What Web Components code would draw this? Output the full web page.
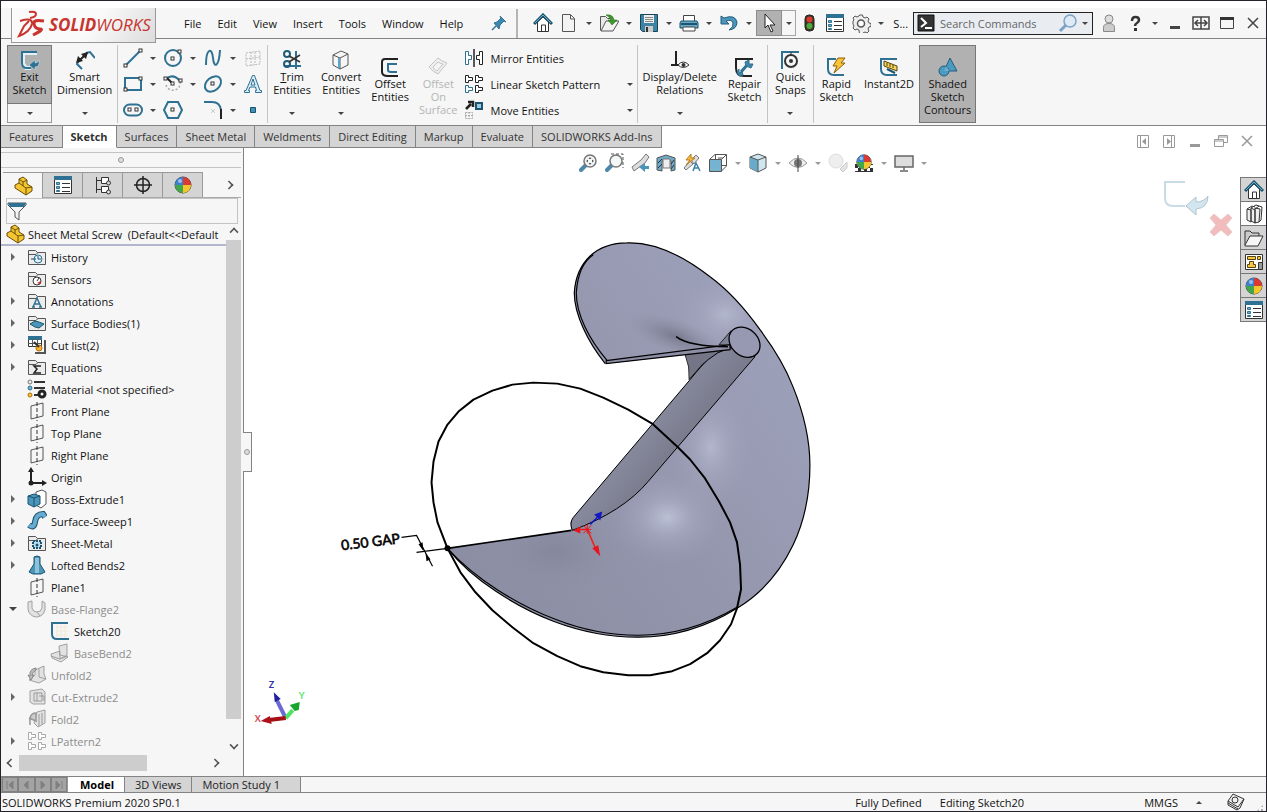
<!DOCTYPE html>
<html lang="en">
<head>
<meta charset="utf-8">
<title>SOLIDWORKS Premium 2020</title>
<style>
    :root {
        --bar: #f6f6f6;
        --tab: #d4d4d4;
        --line: #838383;
        --pressed: #b1b1b1;
    }

    * {
        box-sizing: border-box;
    }

    body {
        margin: 0;
        height: 100vh;
        display: flex;
        flex-direction: column;
        overflow: hidden;
        border: 1px solid #25232a;
        background: white;
        color: #111;
        font: 11px/13px "Open Sans", "Noto Sans", sans-serif;
    }

    main {
        flex: 1;
        min-height: 0;
        display: flex;
    }

    sw-viewport {
        flex: 1;
        min-width: 0;
    }
</style>
</head>
<body>
<sw-titlebar></sw-titlebar>
<sw-ribbon></sw-ribbon>
<sw-tabs></sw-tabs>
<main>
    <sw-panel></sw-panel>
    <sw-viewport></sw-viewport>
</main>
<sw-views></sw-views>
<sw-status>
    <span slot="product">SOLIDWORKS Premium 2020 SP0.1</span>
    <span slot="state">Fully Defined</span>
    <span slot="editing">Editing Sketch20</span>
    <span slot="units">MMGS</span>
</sw-status>

<script>
// Shared pieces of the icons
const node = (x, y) => `<rect x="${x - 1.5}" y="${y - 1.5}" width="3" height="3" fill="#fff" stroke="#333"/>`;
const folder = '<path d="M1.500 17.500V3.500h7l2 2h8v12z" fill="#ececec" stroke="#555"/><path d="M2 7.500h7l2-2" fill="none" stroke="#555"/>';
const plane = '<path d="M4 5l12-3v13L4 18z" fill="none" stroke="#555"/><path d="M10 1v19" stroke="#333" stroke-dasharray="4 2"/>';
const part = '<path d="M2 9l4-2V3l4-2 4 3v4l5 3v4l-6 4L2 12z" fill="#f3c531" stroke="#6b4e05"/><path d="M6 7l7 5 6-1M13 12v7M6 3l4 3v4M10 6l4-2" fill="none" stroke="#6b4e05"/>';
const ball = '<circle cx="10" cy="10" r="8" fill="#ddd" stroke="#444"/><path d="M10 10V2a8 8 0 0 0-8 8z" fill="#3d7fd0"/><path d="M10 10V2a8 8 0 0 1 8 8z" fill="#d93a32"/><path d="M10 10h8a8 8 0 0 1-8 8z" fill="#f2c62c"/><path d="M10 10v8a8 8 0 0 1-8-8z" fill="#42a64b"/><circle cx="7" cy="6" r="2" fill="#fff" opacity=".5"/>';
const sheet = '<path d="M1.500 1.500h17v17h-17z" fill="#fff" stroke="#333"/><path d="M1 1h18v4H1z" fill="#2e7192"/><path d="M3.500 7.500h3v2h-3zM3.500 11.500h3v2h-3zM3.500 15.500h3v1h-3z" fill="#6fb0d0" stroke="#2e7192"/><path d="M9 8.500h8M9 12.500h8M9 16.500h8" stroke="#333"/>';
const ring = 'fill="none" stroke="#2e7192" stroke-width="2"';
const grey = 'fill="#e2e2e2" stroke="#a0a0a0"';
const quad = (c1, c2) => [[1.5, 1.5, c1], [11.5, 1.5, c1], [1.5, 11.5, c2], [11.5, 11.5, c1]].map(([x, y, c]) =>
    `<path d="M${x} ${y}h3v2h4v3h-4v2h-3z" fill="#fff" stroke="${c}"/>`).join('');
const glass = '<path d="M8 12l-5 5" stroke="#4e87a8" stroke-width="4" stroke-linecap="round"/><circle cx="12" cy="8" r="6" fill="#f4f7f8" stroke="#777" stroke-width="1.500"/>';

const ICONS = {
    home: '<path d="M4.500 9v9.500h11V9L10 4z" fill="#fff" stroke="#333"/><path d="M8.500 18v-6h4v6" fill="none" stroke="#333"/><path d="M1 11l9-9 9 9" fill="none" stroke="#1c536d" stroke-width="3"/><path d="M2 10l8-8 8 8" fill="none" stroke="#6fb0d0"/>',
    pin: '<path d="M3 17l4-4" stroke="#2e7192" stroke-width="1.500"/><path d="M5 10l3-1 4-4-1-2 6 6-2-1-4 4-1 4z" fill="#3d86b0" stroke="#2e7192"/>',
    doc: '<path d="M3.500 1.500h8l4 4v13h-12z" fill="#f3f3f3" stroke="#555"/><path d="M11.500 2v4h4" fill="none" stroke="#555"/>',
    open: '<path d="M1.500 17.500v-14h5l2 2h5v3" fill="#e8e8e8" stroke="#555"/><path d="M2 18L7 8h13l-6 10z" fill="#f2f2f2" stroke="#555"/><path d="M7 2q7-1 8 5h3l-5 5-4-5h3q-1-3-5-5z" fill="#3c9b2a" stroke="#216313" stroke-width=".5"/>',
    save: '<path d="M1.500 1.500h17v17h-15l-2-2z" fill="#3d83a6" stroke="#1c4457"/><path d="M5 2h10v8H5z" fill="#eee"/><path d="M6 4.500h8M6 6.500h8M6 8.500h8" stroke="#888"/><path d="M6 13h8v6H6z" fill="#ccc"/><path d="M7 14h2v5H7z" fill="#333"/>',
    print: '<path d="M4.500 9V2.500h11V9" fill="#fff" stroke="#444"/><path d="M2 8h16l1 2v5H1v-5z" fill="#69a9ca" stroke="#1c536d"/><path d="M2 11h16" stroke="#1c536d" stroke-width="2"/><path d="M4 14h12v4H4z" fill="#fff" stroke="#444"/>',
    undo: '<path d="M2 3v8h8L7 8q6-2 7 2 1 4-4 7 8-1 8-8Q16 1 5 5z" fill="#4b95bb" stroke="#225d79"/>',
    arrow: '<path d="M6 1v14l3-3 3 7 2-1-3-6h5z" fill="#fff" stroke="#222"/>',
    traffic: '<rect x="6" y="2" width="9" height="16" rx="4" fill="#432" stroke="#222"/><circle cx="10.500" cy="6.500" r="3" fill="#d93a32"/><circle cx="10.500" cy="13" r="3" fill="#46ad3d"/>',
    list: sheet,
    gear: '<path d="M8.500 2h3l.5 2 2 1 2-1 2 2-1 2 1 2 2 .5v3l-2 .5-1 2 1 2-2 2-2-1-2 1-.5 1h-3L8 17l-2-1-2 1-2-2 1-2-1-2V8l1-1-1-2 2-2 2 1 2-1z" fill="#eee" stroke="#555"/><circle cx="10" cy="10.500" r="3.500" fill="#fff" stroke="#555" stroke-width="1.500"/>',
    prompt: '<path d="M2 2h16v16H2z" fill="#333" stroke="#111"/><path d="M5 5l5 5-5 4" fill="none" stroke="#fff" stroke-width="2"/><path d="M9 15h7" stroke="#fff" stroke-width="2"/>',
    search: '<path d="M8 12l-6 6" stroke="#7ba3c4" stroke-width="3"/><circle cx="12" cy="8" r="6" fill="#dfeaf4" stroke="#7ba3c4" stroke-width="1.500"/>',
    user: '<path d="M4.500 18.500v-4q0-4 5.500-4t5.500 4v4z" fill="#ccc" stroke="#888"/><circle cx="10" cy="6" r="4" fill="#ddd" stroke="#888"/>',
    help: '<path d="M7 8q0-4 3.500-4t3.500 3q0 2-2 3t-2 3" fill="none" stroke="#333" stroke-width="2.500"/><path d="M9 15h3v3H9z" fill="#333"/>',
    min: '<path d="M5 13h10v3H5z" fill="currentColor"/>',
    fit: '<path d="M2 4h16v12H2zM10 4v12M4 10h12M7 7l-3 3 3 3M13 7l3 3-3 3" fill="none" stroke="#444" stroke-width="1.500"/>',
    max: '<path d="M3.500 5.500h13v10h-13z" fill="none" stroke="#444"/><path d="M3 4h14v3H3z" fill="#333"/>',
    close: '<path d="M5 5l10 10M15 5L5 15" stroke="currentColor" stroke-width="1.500"/>',
    dockl: '<path d="M4.500 4.500h11v12h-11z M7.500 4v13" fill="none" stroke="currentColor"/><path d="M13 7v7l-4-3.500z" fill="currentColor"/>',
    dockr: '<path d="M4.500 4.500h11v12h-11z M12.500 4v13" fill="none" stroke="currentColor"/><path d="M8 7v7l4-3.500z" fill="currentColor"/>',
    restore: '<path d="M3.500 8.500h9v7h-9zM3 10h9M7.500 8V4.500h9v7H13M8 6h9" fill="none" stroke="currentColor"/>',

    exit: '<path d="M17 3H3v11l3 4h5" fill="none" stroke="#e4f1f8" stroke-width="4"/><path d="M17 2H2v11q0 5 5 5h4" ' + ring + '/><path d="M9 15l6-5v3q3 0 4-3 1 7-4 7v3z" fill="#2e7192" stroke="#d3e8f3" stroke-width=".5"/>',
    dim: '<path d="M11 3l4-1 5 6M3 12l-1 2 5 5" fill="none" stroke="#2e7192" stroke-width="2"/><path d="M3 12L12 3" stroke="#222" stroke-width="2"/><path d="M1 13l2-7 5 5zM13 2l-7 2 5 5z" fill="#222"/>',
    line: '<path d="M2 18L18 2" stroke="#2e7192" stroke-width="2"/>' + node(2.5, 17.5) + node(17.5, 2.5),
    circle: `<circle cx="10" cy="10" r="8" ${ring}/>` + node(9.5, 10.5) + node(16.5, 3.5),
    spline: '<path d="M3 17C3 0 9-1 10 10s6 9 7-8" ' + ring + '/>',
    grid: '<path d="M3 5l14-2v13L3 18zM8 4v14M12 4v13M3 11l14-2" fill="none" stroke="#bbb" stroke-dasharray="2 1"/>',
    rect: `<path d="M2 4h16v12H2z" ${ring}/>` + node(2.5, 15.5) + node(17.5, 4.5),
    arc: '<path d="M3 11a7 7 0 1 0 14-4" fill="none" stroke="#aaa" stroke-dasharray="2 2" stroke-width="1.500"/><path d="M3 5q7-6 14 2" fill="none" stroke="#2e7192" stroke-width="2"/><path d="M4 4l6 6" stroke="#222" stroke-width="2"/>' + node(2.5, 4.5) + node(17.5, 6.5) + node(9.5, 9.5),
    ellipse: `<ellipse cx="10" cy="10" rx="9" ry="6.500" transform="rotate(-40 10 10)" ${ring}/>` + node(9.5, 9.5),
    glyph: '<path d="M9.500 1.500h2l5.500 15h1.500v2h-6v-2h1l-1-3.500H7l-1.500 3.500h1v2h-5v-2H3zM8 11h4l-2-6z" fill="#d9eef8" stroke="#2e7192"/>',
    slot: `<rect x="1" y="4.500" width="18" height="11" rx="5.500" ${ring}/>` + node(6.5, 9.5) + node(13.5, 9.5),
    hex: `<path d="M1 10l4-8h10l4 8-4 8H5z" ${ring}/>` + node(9.5, 9.5),
    fillet: '<path d="M1 2h8q8 0 9 8" ' + ring + '/><path d="M18 9v10" stroke="#222" stroke-width="2"/><path d="M8 9l4 4M12 9l-4 4" stroke="#ccc"/>',
    point: '<path d="M7.500 7.500h5v5h-5z" fill="#3f91b7" stroke="#1c536d"/>',
    trim: '<path d="M2 16h17M14 1v18" stroke="#2e7192" stroke-width="2"/><circle cx="5" cy="4" r="3" fill="none" stroke="#205c7a" stroke-width="2"/><circle cx="5" cy="14" r="3" fill="none" stroke="#205c7a" stroke-width="2"/><path d="M7 6l11 6M7 12l11-7" stroke="#333" stroke-width="1.500"/>',
    convert: '<path d="M2 5l8-4 7 3v11l-8 4-7-4z" fill="#f6f6f6" stroke="#555"/><path d="M2 5l7 3 8-4M9 8v11" fill="none" stroke="#555"/><path d="M8 8v10" stroke="#58a6cc" stroke-width="2"/>',
    offset: '<path d="M18 2H5q-3 0-3 3v10q0 4 6 4h10" fill="none" stroke="#222" stroke-width="2"/><path d="M17 7H8v6q0 2 3 2h6" ' + ring + '/>',
    offsurf: '<path d="M1 10l9-9q3 3 9 5l-9 11q-5-2-9-7z" fill="#efefef" stroke="#c3c3c3"/><path d="M5 10l5-5q3 2 5 2l-6 7q-3-1-4-4z" fill="#f6f6f6" stroke="#c3c3c3"/>',
    mirror: '<path d="M1.500 3.500h3v4h3v4h-3v5h-3z" fill="#fff" stroke="#2e7192"/><path d="M18.500 3.500h-3v4h-3v4h3v5h3z" fill="#fff" stroke="#222"/><path d="M10 1v18" stroke="#222" stroke-width="1.500"/>',
    pattern: quad('#222', '#2e7192'),
    move: '<path d="M2 9l5-5M4 2h5v5" fill="none" stroke="#222" stroke-width="2.500"/><path d="M12 3h6v6h-6z" fill="#9dcbe2" stroke="#1c536d" stroke-width="2"/><path d="M1.500 12.500h7v6h-7zM1 15.500h7M5 12v7" fill="none" stroke="#aaa" stroke-dasharray="2 1"/>',
    relations: '<path d="M6 1v14M1 15h8" stroke="#222" stroke-width="2"/><path d="M8 15q5-6 11 0-6 5-11 0z" fill="#fff" stroke="#333"/><circle cx="13.500" cy="15" r="2" fill="#333"/>',
    repair: '<path d="M19 2H2v9q0 8 8 8h8" fill="none" stroke="#222" stroke-width="2"/><path d="M7 15l7-8" stroke="#2e7192" stroke-width="3"/><path d="M5 12v4l3-1 1 3-4 1-2-4zM12 9l-1-4 4-2v4h4l-2 4z" fill="#3f86aa" stroke="#2e7192"/>',
    snaps: '<path d="M1 2h18M2 2v17" stroke="#2e7192" stroke-width="2"/><circle cx="11" cy="11" r="6" fill="none" stroke="#333" stroke-width="2"/><circle cx="11" cy="11" r="2" fill="#333"/><path d="M11 2v4" stroke="#333"/>',
    rapid: '<path d="M10 2H2v10q0 6 6 6h10" ' + ring + '/><path d="M12 1h7l-4 5h4L8 16l3-7H7z" fill="#f8c63b" stroke="#925d08"/>',
    instant: '<path d="M18 2H2v10q0 6 6 6h10" ' + ring + '/><path d="M5 4l13 5v5L5 9z" fill="#f4d45c" stroke="#554411"/><path d="M8 6v3M11 7v3M14 8v3" stroke="#554411"/><path d="M8 12l8 4" stroke="#1c536d" stroke-width="2"/>',
    contours: '<path d="M12 1l7 13H6z" fill="#4b9ac2" stroke="#245d7c"/><circle cx="6" cy="14" r="5" fill="#4b9ac2" stroke="#245d7c"/><path d="M8 9l4 5H6z" fill="#85bbd6" opacity=".6"/>',

    part,
    config: '<path d="M3.500 2v16M4 5.500h4M4 14.500h4" fill="none" stroke="#333"/><path d="M8.500 2.500h7v6h-7zM8.500 11.500h7v6h-7z" fill="#fff" stroke="#333"/><circle cx="15.500" cy="8" r="2" fill="#ddd" stroke="#333"/><circle cx="15.500" cy="17" r="2" fill="#ddd" stroke="#333"/>',
    target: '<circle cx="10" cy="10" r="6.500" fill="none" stroke="#222" stroke-width="1.500"/><path d="M10 1v18M1 10h18" stroke="#222" stroke-width="1.500"/>',
    ball,
    funnel: '<path d="M1 2h18v2l-7 7v8l-4-3v-5L1 4z" fill="#f4f4f4" stroke="#555"/><path d="M1 2h18l-2 4H3z" fill="#2e7192"/>',
    history: folder + '<circle cx="11" cy="12" r="4" fill="#dff0fa" stroke="#2e7192"/><path d="M11 9v3h3M4 12h5" stroke="#1c536d" fill="none"/>',
    sensors: folder + '<circle cx="10" cy="12" r="4" fill="#fff" stroke="#333"/><path d="M10 12l2-3" stroke="#333"/><path d="M10 14l4-2-1 3z" fill="#d22"/>',
    annot: folder + '<path d="M6 16l4-9 4 9M7.500 13h5M5 16h3M12 16h3" fill="none" stroke="#2e7192" stroke-width="1.500"/>',
    surf: folder + '<path d="M3 11l5-3 4 1 5 2-5 4-4-1z" fill="#4b95bb" stroke="#1c536d"/>',
    cut: '<path d="M1.500 1.500h13v10h-13z" fill="#fff" stroke="#333"/><path d="M1 1h14v4H1z" fill="#2e7192"/><path d="M5.500 4v8M10.500 4v8M1 8.500h13" stroke="#555"/><path d="M18 5v13H8" fill="none" stroke="#555" stroke-width="2"/><circle cx="12" cy="13" r="3" fill="#f7b733" stroke="#b06b09"/><path d="M7 7l5 5" stroke="#333" stroke-width="2"/>',
    equations: folder + '<path d="M14 9H7l3 3-3 4h7" fill="none" stroke="#222" stroke-width="1.500"/>',
    material: '<path d="M7 3h11M7 9h11M7 16h4" stroke="#333" stroke-width="2"/><circle cx="3" cy="3" r="2" fill="#eee" stroke="#777"/><circle cx="3" cy="9" r="2" fill="#6fb0d0" stroke="#2e7192"/><circle cx="3" cy="16" r="2" fill="#f7c744" stroke="#b06b09"/><circle cx="15" cy="15" r="3" fill="none" stroke="#222" stroke-width="3"/>',
    plane,
    origin: '<path d="M4 3v13h12" fill="none" stroke="#222" stroke-width="2"/><path d="M1 5l3-5 3 5zM15 13l5 3-5 3z" fill="#222"/><circle cx="4" cy="16" r="2.500" fill="#222"/>',
    boss: '<path d="M9 3l6-2 4 2v12l-5 4-5-3z" fill="#fff" stroke="#555"/><path d="M1 7l6-2 6 2v8l-6 3-6-3z" fill="#4b95bb" stroke="#1c536d"/><path d="M1 7l6 2 6-2M7 9v9" fill="none" stroke="#1c536d"/>',
    sweep: '<path d="M2 14q5 4 6-3 1-8 8-8l2 3" fill="none" stroke="#1c536d" stroke-width="6"/><path d="M2 14q5 4 6-3 1-8 8-8l2 3" fill="none" stroke="#67abd0" stroke-width="4"/>',
    sheetmetal: folder + '<path d="M6 8h8v7H6z" fill="#b9deef" stroke="#1c536d" stroke-width="2" stroke-dasharray="2 1"/><circle cx="10" cy="12" r="1.500" fill="#1c536d"/>',
    loft: '<path d="M7 2q3-2 6 0v7l5 8-4 2H6l-4-2 5-8z" fill="#4b95bb" stroke="#1c536d"/><path d="M9 3v15M11 3v15" stroke="#d3edf8"/>',
    flange: `<path d="M1 3l4-1v7q1 4 5 4t5-4V2l3 2v7q-2 7-9 7-7-1-8-8z" ${grey}/><path d="M10 13l3 4" stroke="#a0a0a0"/>`,
    sketch: '<path d="M6 6h12M6 10h12M6 14h12M7 4v13M11 4v13M15 4v13" stroke="#f2ead7"/><path d="M18 2H2v11q0 5 5 5h12" ' + ring + '/>',
    bend: `<path d="M9 3l8-2v11l-7 4zM1 11l9-3v4l8 2-7 5-9-4z" ${grey}/><path d="M1 13l9 3 8-3" fill="none" stroke="#a0a0a0"/>`,
    unfold: `<path d="M8 5l9-4v8l2 5-7 4-10-3 6-5z" ${grey}/><path d="M9 3q-7 1-6 8l-2-1 3 5 3-5-2 1q0-4 4-6z" fill="#bbb" stroke="#888"/><path d="M12 4v8l7 2" fill="none" stroke="#a0a0a0"/>`,
    cutx: `<path d="M3 4l12-2 3 3v12H6l-3-2z" ${grey}/><path d="M7 6h8v8H7zM10 6v8M12 9h5v5" fill="none" stroke="#999"/>`,
    fold: `<path d="M10 3l8-2v13l-7 4-4-4z" ${grey}/><path d="M3 16V9q1-5 6-5v8L2 9" fill="#ccc" stroke="#999" stroke-width="1.500"/><path d="M12 5v12M15 4v11" stroke="#999"/>`,
    lpat: quad('#a8a8a8', '#a8a8a8'),

    zoomfit: glass + '<path d="M12 4l1.500 2h-3zM12 12l1.500-2h-3zM8 8l2-1.500v3zM16 8l-2-1.500v3z" fill="#555"/>',
    zoomarea: glass + '<path d="M7 1h12v14" fill="none" stroke="#555" stroke-dasharray="3 2"/>',
    prevview: '<path d="M2 14l9-7 5-6 3 3-4 6-11 8z" fill="#ddd" stroke="#777"/><path d="M9 14l6-4v3h4v3h-4v3z" fill="#4b95bb"/>',
    section: '<path d="M1 5l9-3 9 3v12l-4 1V8H6v10l-5-1z" fill="#6fa9c6" stroke="#555"/><path d="M2 10l4-4M2 15l4-4M15 11l3-4M15 16l3-4" stroke="#234"/><path d="M7 6v9h7V6z" fill="#eee" stroke="#777"/>',
    dynann: '<path d="M2 15l6-7 3 3-7 6zM9 7l5-5 3 3-5 6z" fill="#ddd" stroke="#777"/><path d="M9 1L4 7h4l-4 5 9-7H9z" fill="#f6bd45" stroke="#b67a18"/><path d="M11 18l3-8 4 8M12.500 15h4" fill="none" stroke="#3b82a8" stroke-width="1.500"/>',
    orient: '<path d="M1.500 6.500h12v12h-12z" fill="#75b3d0" stroke="#555"/><path d="M2 6l5-4.500h11.500V13l-5 5M14 6l4-4M7.500 2v4M14 12.500h4M10 5h5" fill="none" stroke="#555"/>',
    style: '<path d="M2 4l8-3 8 3v11l-8 4-8-4z" fill="#cfe5ef" stroke="#555"/><path d="M2 4l8 3v12l-8-4z" fill="#69aaca"/><path d="M2 4l8 3 8-3M10 7v12" fill="none" stroke="#555"/>',
    eye: '<path d="M1 10q9-10 18 0-9 9-18 0z" fill="#eee" stroke="#999"/><circle cx="10" cy="10" r="4" fill="#777"/><path d="M10 2v17" stroke="#444"/>',
    appear: '<circle cx="8" cy="8" r="7" fill="#eee" stroke="#ddd"/><path d="M12 16l7-7v6l-4 4z" fill="#e3e3e3" stroke="#ccc"/>',
    scene: '<path d="M1 11h18v8H1z" fill="#333"/><path d="M4 12h3v3H4zM10 12h3v3h-3zM16 12h3v3h-3zM1 15h3v3H1zM7 15h3v3H7zM13 15h3v3h-3z" fill="#fff"/><g transform="translate(1 0) scale(.9)">' + ball + '</g>',
    screen: '<path d="M1 3h18v11H1z" fill="#ddd" stroke="#666" stroke-width="1.500"/><path d="M10 14v3M6 18h8" stroke="#666" stroke-width="1.500"/>',

    library: '<path d="M3 5l4 1v12l-4-2zM7 4l4 2v13l-4-2zM11 4l5 1-1 13-4 1z" fill="#eee" stroke="#333"/><path d="M3 5l5-3 3 1M7 4l5-3 3 1M11 5l4-3 3 1-1 13-2 2" fill="none" stroke="#333"/>',
    files: '<path d="M1 17V3h5l2 2h7v3" fill="#ccc" stroke="#333"/><path d="M1 17L6 8h13l-5 10H1z" fill="#f6f6f6" stroke="#333"/>',
    palette: '<path d="M1.500 2.500h17v15h-17z" fill="#fff" stroke="#333"/><path d="M3.500 4.500h8v3h-8zM13.500 4.500h3v3h-3zM5.500 9.500h4v3h2v3h-8v-3h2z" fill="#f7c744" stroke="#554411"/><path d="M14.500 10.500h4v7h-4z" fill="#999" stroke="#333"/>',
    stamp: '<path d="M2 9l5-7 11 5-4 9-3 2-9-5z" fill="#eee" stroke="#333"/><path d="M2 9l10 6 6-8M2 11l10 6" fill="none" stroke="#333"/><circle cx="9" cy="8" r="3" fill="none" stroke="#333"/>',
};

// Base class: draws the component's template into an open shadow root
class SwElement extends HTMLElement {
    constructor() {
        super();
        this.attachShadow({ mode: 'open' });
    }

    connectedCallback() {
        this.shadowRoot.innerHTML = `
            <style>
                *, :host { box-sizing: border-box; }
                button {
                    font: inherit;
                    color: inherit;
                    background: none;
                    border: 0;
                    padding: 0;
                    margin: 0;
                }
                ${this.styles()}
            </style>
            ${this.template()}
        `;
    }

    styles() {
        return '';
    }
}

class SwIcon extends SwElement {
    styles() {
        return `
            :host { display: block; flex: none; width: 20px; height: 20px; }
            svg { display: block; width: 100%; height: 100%; }
        `;
    }

    template() {
        return `<svg viewBox="0 0 20 20" aria-hidden="true">${ICONS[this.getAttribute('name')] || ''}</svg>`;
    }
}

// Small black triangle of a drop-down
class SwCaret extends SwElement {
    styles() {
        return `
            :host { display: flex; flex: none; width: 14px; justify-content: center; align-items: center; }
            i { border: 3px solid transparent; border-top-color: #444; border-bottom: 0; }
            :host([light]) i { border-top-color: #999; }
        `;
    }

    template() {
        return '<i></i>';
    }
}

// Icon button of a toolbar, with an optional drop-down beside it
class SwIconButton extends SwElement {
    styles() {
        return `
            :host { display: flex; flex: none; height: 26px; }
            button { display: flex; align-items: center; justify-content: center; }
            .main { width: 26px; }
            .more { width: 14px; }
            :host([pressed]) .main { background: var(--pressed); border: 1px solid #8d8d8d; }
            :host([pressed]) .more { border: 1px solid #a5a5a5; border-left: 0; }
        `;
    }

    template() {
        const icon = this.getAttribute('icon');
        const label = this.getAttribute('label') || icon;
        const light = this.hasAttribute('light') ? 'light' : '';
        return `
            <button class="main" aria-label="${label}"><sw-icon name="${icon}"></sw-icon></button>
            ${this.hasAttribute('menu') ? `<button class="more" aria-label="${label} options"><sw-caret ${light}></sw-caret></button>` : ''}
        `;
    }
}

// Tall ribbon button: icon over a slotted label
class SwTool extends SwElement {
    styles() {
        return `
            :host { display: flex; flex-direction: column; flex: none; height: 78px; min-width: 45px; }
            button { width: 100%; text-align: center; white-space: nowrap; }
            .main { flex: 1; padding: 12px 5px 0; display: flex; flex-direction: column; align-items: center; border: 0 solid #777; }
            :host([menu]) .main { padding-top: 5px; }
            .more { height: 19px; display: flex; justify-content: center; border: 0 solid #999; }
            :host([pressed]) .main { background: var(--pressed); border-width: 1px; padding: 11px 4px 0; }
            :host([pressed][menu]) .main { padding-top: 4px; }
            :host([pressed]) .more { border-width: 0 1px 1px; }
            :host([disabled]) { color: #b5b5b5; }
            button:disabled { color: inherit; }
        `;
    }

    template() {
        const menu = this.hasAttribute('menu');
        return `
            <button class="main" ${this.hasAttribute('disabled') ? 'disabled' : ''}>
                <sw-icon name="${this.getAttribute('icon')}"></sw-icon>
                <span><slot></slot></span>
            </button>
            ${menu ? '<button class="more" aria-label="More"><sw-caret></sw-caret></button>' : ''}
        `;
    }
}

class SwTitlebar extends SwElement {
    styles() {
        return `
            :host { display: flex; align-items: center; flex: none; height: 38px; padding-top: 7px; background: linear-gradient(white 7px, var(--bar) 7px); border-bottom: 1px solid var(--line); }
            .logo { align-self: flex-start; flex: none; width: 145px; height: 35px; margin: 0 20px -5px 10px; padding-left: 4px; display: flex; align-items: center; gap: 3px; background: linear-gradient(125deg, #fafafa 55%, #dcdcdc); border: 1px solid #999; border-top: 0; z-index: 1; position: relative; color: #c8352f; font: italic 17px/20px "Open Sans", sans-serif; }
            .logo svg { width: 30px; height: 30px; flex: none; }
            nav { display: flex; }
            nav button { padding: 0 8px; }
            .pin { margin-left: 15px; }
            .quick { display: flex; align-items: center; margin-left: 4px; padding-left: 12px; height: 29px; border-left: 2px solid #b5b5b5; }
            .name { margin: 0 5px; }
            .search { flex: 0 1 180px; min-width: 0; height: 23px; display: flex; align-items: center; background: #e9edf2; border: 1px solid #222; padding-left: 2px; }
            input { flex: 1; min-width: 0; border: 0; background: none; font: inherit; padding: 0 4px; outline: 0; }
            input::placeholder { color: #666; }
            .window { display: flex; margin-left: auto; color: #444; }
        `;
    }

    template() {
        return `
            <div class="logo">
                <svg viewBox="0 0 30 30" fill="none" stroke="#c8352f" stroke-width="2">
                    <path d="M13 2Q20 1 20 4T14 8M4 11Q17 7 16 14 14 22 3 26L8 16 13 11"/>
                    <path d="M28 11Q17 9 18 14T24 19 17 25" stroke-width="3"/>
                </svg>
                <span><b>SOLID</b>WORKS</span>
            </div>
            <nav>
                ${['File', 'Edit', 'View', 'Insert', 'Tools', 'Window', 'Help'].map(m => `<button>${m}</button>`).join('')}
            </nav>
            <sw-icon-button class="pin" icon="pin"></sw-icon-button>
            <div class="quick">
                <sw-icon-button icon="home"></sw-icon-button>
                <sw-icon-button icon="doc" menu></sw-icon-button>
                <sw-icon-button icon="open" menu></sw-icon-button>
                <sw-icon-button icon="save" menu></sw-icon-button>
                <sw-icon-button icon="print" menu></sw-icon-button>
                <sw-icon-button icon="undo" menu></sw-icon-button>
                <sw-icon-button icon="arrow" label="Select" menu pressed></sw-icon-button>
                <sw-icon-button icon="traffic" label="Rebuild"></sw-icon-button>
                <sw-icon-button icon="list" label="File properties"></sw-icon-button>
                <sw-icon-button icon="gear" label="Options" menu></sw-icon-button>
                <span class="name">S...</span>
            </div>
            <div class="search">
                <sw-icon name="prompt"></sw-icon>
                <input type="text" aria-label="Search Commands" placeholder="Search Commands">
                <sw-icon name="search"></sw-icon>
                <sw-caret></sw-caret>
            </div>
            <div class="window">
                <sw-icon-button icon="user"></sw-icon-button>
                <sw-icon-button icon="help" menu></sw-icon-button>
                <sw-icon-button icon="min" label="Minimize"></sw-icon-button>
                <sw-icon-button icon="fit" label="Span displays"></sw-icon-button>
                <sw-icon-button icon="max" label="Maximize"></sw-icon-button>
                <sw-icon-button icon="close"></sw-icon-button>
            </div>
        `;
    }
}

class SwRibbon extends SwElement {
    styles() {
        return `
            :host { display: flex; flex: none; height: 87px; padding: 6px 0 0 6px; background: var(--bar); border-bottom: 1px solid var(--line); }
            hr { flex: none; width: 1px; height: 78px; margin: 0; border: 0; background: #c4c4c4; }
            .sketch { display: grid; grid-template-columns: 40px 40px 40px 26px; grid-auto-rows: 26px; padding: 0 1px 0 2px; }
            .list { width: 174px; padding-left: 1px; }
            .list button { width: 100%; height: 26px; display: flex; align-items: center; gap: 7px; }
            .list span { flex: 1; text-align: left; }
        `;
    }

    template() {
        const small = ['line+', 'circle+', 'spline+', 'grid', 'rect+', 'arc+', 'ellipse+', 'glyph', 'slot+', 'hex', 'fillet+', 'point'];
        return `
            <sw-tool icon="exit" menu pressed>Exit<br>Sketch</sw-tool>
            <sw-tool icon="dim" menu>Smart<br>Dimension</sw-tool>
            <hr>
            <div class="sketch">
                ${small.map(s => `<sw-icon-button icon="${s.replace('+', '')}" ${s.endsWith('+') ? 'menu' : ''}></sw-icon-button>`).join('')}
            </div>
            <hr>
            <sw-tool icon="trim" menu><u>T</u>rim<br>Entities</sw-tool>
            <sw-tool icon="convert" menu>Convert<br>Entities</sw-tool>
            <sw-tool icon="offset">Offset<br>Entities</sw-tool>
            <sw-tool icon="offsurf" disabled>Offset<br>On<br>Surface</sw-tool>
            <div class="list">
                <button><sw-icon name="mirror"></sw-icon><span>Mirror Entities</span></button>
                <button><sw-icon name="pattern"></sw-icon><span>Linear Sketch Pattern</span><sw-caret></sw-caret></button>
                <button><sw-icon name="move"></sw-icon><span>Move Entities</span><sw-caret></sw-caret></button>
            </div>
            <hr>
            <sw-tool icon="relations" menu>Display/Delete<br>Relations</sw-tool>
            <sw-tool icon="repair">Repair<br>Sketch</sw-tool>
            <hr>
            <sw-tool icon="snaps" menu>Quick<br>Snaps</sw-tool>
            <hr>
            <sw-tool icon="rapid">Rapid<br>Sketch</sw-tool>
            <sw-tool icon="instant">Instant2D</sw-tool>
            <sw-tool icon="contours" pressed>Shaded<br>Sketch<br>Contours</sw-tool>
        `;
    }
}

class SwTabs extends SwElement {
    styles() {
        return `
            :host { display: flex; flex: none; height: 22px; background: white; }
            [role=tab] { flex: none; padding: 0 8px; background: var(--tab); color: #333; border: 1px solid var(--line); border-width: 0 1px 1px 0; }
            [aria-selected=true] { background: white; font-weight: bold; border-bottom-color: white; }
            .window { display: flex; margin: 2px 6px 0 auto; color: #999; }
        `;
    }

    template() {
        const tabs = ['Features', 'Sketch', 'Surfaces', 'Sheet Metal', 'Weldments', 'Direct Editing', 'Markup', 'Evaluate', 'SOLIDWORKS Add-Ins'];
        return `
            ${tabs.map(t => `<button role="tab" aria-selected="${t === 'Sketch'}">${t}</button>`).join('')}
            <div class="window">
                <sw-icon-button icon="dockl"></sw-icon-button>
                <sw-icon-button icon="dockr"></sw-icon-button>
                <sw-icon-button icon="min"></sw-icon-button>
                <sw-icon-button icon="restore"></sw-icon-button>
                <sw-icon-button icon="close"></sw-icon-button>
            </div>
        `;
    }
}

// Feature tree rows: icon, text, flags (+ closed, - open, x suppressed, > child)
const FEATURES = [
    ['history', 'History', '+'],
    ['sensors', 'Sensors', ''],
    ['annot', 'Annotations', '+'],
    ['surf', 'Surface Bodies(1)', '+'],
    ['cut', 'Cut list(2)', '+'],
    ['equations', 'Equations', '+'],
    ['material', 'Material &lt;not specified&gt;', ''],
    ['plane', 'Front Plane', ''],
    ['plane', 'Top Plane', ''],
    ['plane', 'Right Plane', ''],
    ['origin', 'Origin', ''],
    ['boss', 'Boss-Extrude1', '+'],
    ['sweep', 'Surface-Sweep1', '+'],
    ['sheetmetal', 'Sheet-Metal', '+'],
    ['loft', 'Lofted Bends2', '+'],
    ['plane', 'Plane1', ''],
    ['flange', 'Base-Flange2', '-x'],
    ['sketch', 'Sketch20', '>'],
    ['bend', 'BaseBend2', '>x'],
    ['unfold', 'Unfold2', 'x'],
    ['cutx', 'Cut-Extrude2', '+x'],
    ['fold', 'Fold2', 'x'],
    ['lpat', 'LPattern2', '+x'],
];

class SwFeature extends SwElement {
    styles() {
        return `
            :host { display: flex; align-items: center; height: 22px; padding-left: 7px; white-space: nowrap; }
            .fold { width: 10px; height: 10px; margin-right: 9px; flex: none; display: flex; align-items: center; justify-content: center; }
            .fold::before { content: ""; border: 4px solid transparent; border-right: 0; }
            :host([fold="+"]) .fold::before { border-left-color: #666; }
            :host([fold="-"]) .fold::before { border: 4px solid transparent; border-top-color: #444; border-bottom: 0; }
            sw-icon { margin-right: 4px; }
            :host([child]) { padding-left: 30px; }
            :host([suppressed]) { color: #8c8c8c; }
        `;
    }

    template() {
        const tag = this.getAttribute('fold') ? 'button' : 'span';
        return `<${tag} class="fold" ${tag === 'button' ? 'aria-label="Toggle"' : ''}></${tag}><sw-icon name="${this.getAttribute('icon')}"></sw-icon><slot></slot>`;
    }
}

class SwPanel extends SwElement {
    styles() {
        return `
            :host { position: relative; display: flex; flex-direction: column; flex: none; width: 243px; background: var(--bar); border-right: 1px solid var(--line); }
            .grip { flex: none; height: 16px; margin: 4px 2px 4px 0; border: 1px solid #c4c4c4; border-width: 1px 0; display: flex; justify-content: center; align-items: center; }
            .grip i, .edge i { width: 6px; height: 6px; border: 1px solid #999; border-radius: 50%; background: #ddd; }
            .tabs { flex: none; display: flex; height: 26px; margin: 0 2px; border-bottom: 1px solid #aaa; }
            .tabs button { width: 40px; display: flex; align-items: center; justify-content: center; background: var(--tab); border: 1px solid #999; border-left: 0; border-bottom: 0; }
            .tabs [aria-selected=true] { background: var(--bar); margin-bottom: -1px; }
            .tabs .next { margin-left: auto; width: 24px; background: none; border: 0; }
            .chev { width: 8px; height: 8px; border: 2px solid #555; border-width: 2px 2px 0 0; rotate: 45deg; scale: .8; }
            .filter { flex: none; height: 26px; margin: 0 5px; display: flex; align-items: center; border: 1px solid #c4c4c4; }
            .filter input { flex: 1; min-width: 0; border: 0; background: none; font: inherit; outline: 0; }
            .body { flex: 1; min-height: 0; display: flex; margin-right: 2px; }
            .tree { flex: 1; min-width: 0; overflow: hidden; }
            .root { display: flex; align-items: center; gap: 3px; height: 22px; padding-left: 4px; border-bottom: 2px solid #b3b6cf; }
            .root span { white-space: pre; }
            .vbar { flex: none; width: 15px; display: flex; flex-direction: column; align-items: center; }
            .vbar button, .hbar button { width: 16px; height: 16px; flex: none; display: flex; align-items: center; justify-content: center; }
            .vbar .thumb { width: 15px; flex: 26; background: #cdcdcd; }
            .vbar .rest { flex: 1; }
            .up { rotate: -45deg; }
            .down { rotate: 135deg; }
            .left { rotate: -135deg; }
            .hbar { flex: none; display: flex; height: 16px; margin: 2px 20px 5px 2px; }
            .hbar .thumb { width: 128px; background: #cdcdcd; }
            .hbar button:last-child { margin-left: auto; }
            .edge { position: absolute; left: 242px; top: 284px; width: 9px; height: 40px; background: var(--bar); border: 1px solid var(--line); border-left: 0; z-index: 1; display: flex; align-items: center; justify-content: center; }
        `;
    }

    template() {
        const tabs = ['part', 'list', 'config', 'target', 'ball'];
        const rows = FEATURES.map(([icon, text, flags]) => {
            const fold = flags.includes('+') ? '+' : flags.includes('-') ? '-' : '';
            return `<sw-feature icon="${icon}" fold="${fold}" ${flags.includes('>') ? 'child' : ''} ${flags.includes('x') ? 'suppressed' : ''}>${text}</sw-feature>`;
        });
        return `
            <div class="grip"><i></i></div>
            <div class="tabs">
                ${tabs.map((t, i) => `<button role="tab" aria-label="${t}" aria-selected="${i === 0}"><sw-icon name="${t}"></sw-icon></button>`).join('')}
                <button class="next" aria-label="More tabs"><i class="chev"></i></button>
            </div>
            <label class="filter"><sw-icon name="funnel"></sw-icon><input type="text" aria-label="Filter"></label>
            <div class="body">
                <div class="tree">
                    <div class="root"><sw-icon name="part"></sw-icon><span>Sheet Metal Screw  (Default&lt;&lt;Default</span></div>
                    ${rows.join('')}
                </div>
                <div class="vbar">
                    <button aria-label="Scroll up"><i class="chev up"></i></button>
                    <div class="thumb"></div>
                    <div class="rest"></div>
                    <button aria-label="Scroll down"><i class="chev down"></i></button>
                </div>
            </div>
            <div class="hbar">
                <button aria-label="Scroll left"><i class="chev left"></i></button>
                <div class="thumb"></div>
                <button aria-label="Scroll right"><i class="chev"></i></button>
            </div>
            <div class="edge"><i></i></div>
        `;
    }
}

// The helical blade, its shaft and the open sketch
class SwModel extends SwElement {
    styles() {
        return `
            :host { display: block; min-height: 0; }
            svg { display: block; width: 100%; height: 100%; }
            text { font-family: Lato, sans-serif; }
        `;
    }

    template() {
        const outer = 'M605 364C588 343 574 315 574 293C576 262 596 243 627 243C656 242 683 256 710 277C729 291 745 309 760 330C775 350 785 366 793 387C804 414 810 439 810 466C810 498 803 525 793 546C780 573 762 594 737 609C708 627 675 638 638 638C611 638 582 633 553 622C517 608 472 581 447 549';
        const body = outer + 'L571 531L570 523L573 518L690 380Q690 365 685 355Z';
        return `
            <svg viewBox="244 148 1022 629" role="img" aria-label="Sheet metal screw">
                <defs>
                    <linearGradient id="blade" gradientUnits="userSpaceOnUse" x1="470" y1="600" x2="790" y2="380">
                        <stop offset="0" stop-color="#8b8da3"/><stop offset=".5" stop-color="#9395ac"/><stop offset="1" stop-color="#9c9fb8"/>
                    </linearGradient>
                    <linearGradient id="shaft" gradientUnits="userSpaceOnUse" x1="640" y1="425" x2="690" y2="465">
                        <stop offset="0" stop-color="#898b9f"/><stop offset=".6" stop-color="#7c7e90"/><stop offset="1" stop-color="#74768a"/>
                    </linearGradient>
                    <radialGradient id="shine"><stop offset="0" stop-color="#bcc0d5"/><stop offset=".4" stop-color="#a9acc3" stop-opacity=".6"/><stop offset="1" stop-color="#9b9db5" stop-opacity="0"/></radialGradient>
                    <radialGradient id="shade"><stop offset="0" stop-color="#6f7183" stop-opacity=".8"/><stop offset="1" stop-color="#8b8da2" stop-opacity="0"/></radialGradient>
                    <clipPath id="outline"><path d="${body}"/></clipPath>
                </defs>

                <path d="${body}" fill="url(#blade)"/>
                <g clip-path="url(#outline)">
                    <ellipse cx="667" cy="518" rx="60" ry="48" fill="url(#shine)"/>
                    <ellipse cx="711" cy="448" rx="45" ry="70" fill="url(#shine)" opacity=".75"/>
                    <ellipse cx="725" cy="315" rx="55" ry="45" fill="url(#shine)" opacity=".7"/>
                    <ellipse cx="676" cy="337" rx="52" ry="18" fill="url(#shade)" transform="rotate(20 676 337)"/>
                    <ellipse cx="555" cy="552" rx="70" ry="40" fill="url(#shade)" opacity=".4"/>
                </g>
                <g fill="none" stroke="#000" stroke-width="1.200">
                    <path d="${outer}"/>
                    <path d="M447 549C475 580 518 606 555 620C583 631 611 636 638 636C675 636 708 625 737 608M607 361C589 340 576 315 576 293Q578 265 593 255"/>
                    <path d="M447 549L571 531" stroke-width="1.600"/>
                </g>
                <path d="M685 355Q690 367 689 380L703 364L730 348Z" fill="#747687" stroke="#000" stroke-width=".8"/>
                <path d="M719 345L731 331L736 346Z" fill="#7e8094" stroke="#222"/>
                <path d="M573 518L690 380Q702 365 708 360Q717 352 730 348L755 357L648 482Q623 512 572 531Q569 523 573 518Z" fill="url(#shaft)" stroke="#000"/>
                <path d="M606 361L730 345V350L606 364Z" fill="#8c8ea5" stroke="#000" stroke-width="1.200"/>
                <path d="M676 337Q689 347 728 347" fill="none" stroke="#000" stroke-width="1.500"/>
                <ellipse cx="744.500" cy="342.500" rx="17" ry="13.500" transform="rotate(42 744.500 342.500)" fill="#9799b2" stroke="#000" stroke-width="1.300"/>

                <path d="M533 383L512 385 492 391 473 400 458 412 447 425 438 442 433 462 431 483 433 503 437 523 447 549 460 573 475 593 492 611 512 628 533 644 557 657 580 667 603 673 628 676 650 676 672 672 690 665 707 654 720 641 731 625 737 609 741 590 740 565 737 543 730 523 719 502 705 479 690 460 677 447 652 424 628 410 603 398 580 389 557 384Z" fill="none" stroke="#000" stroke-width="2" stroke-linejoin="round"/>

                <text x="341" y="551" font-size="14" stroke="#000" stroke-width=".6" transform="rotate(-7 341 551)">0.50 GAP</text>
                <path d="M401 538L416 536L432 567M416 553L447 549" fill="none" stroke="#000" stroke-width="1.200"/>
                <path d="M423 552L418 545L422 543ZM425 554L426 562L430 560Z"/>
                <circle cx="447" cy="549" r="3"/>

                <path d="M587 530L597 553M587 530H576" stroke="#e21" stroke-width="1.500"/>
                <path d="M600 557L592 549L598 546ZM573 531L580 527V534Z" fill="#e8141c"/>
                <path d="M583 526l8 8M591 526l-8 8M587 525v9M582 530h9" stroke="#e8141c"/>
                <path d="M590 525L599 516" stroke="#1216c4" stroke-width="1.500"/>
                <path d="M602 512L600 521L594 515Z" fill="#1216c4"/>

                <path d="M285 719L276 701" stroke="#6a6ad4" stroke-width="4"/>
                <path d="M273 693L280 700L274 703Z" fill="#20209a"/>
                <path d="M285 719L292 711" stroke="#4fe45f" stroke-width="4"/>
                <path d="M299 703L298 711L294 712L289 706Z" fill="#18a52c"/>
                <path d="M285 719L268 721" stroke="#a31116" stroke-width="4"/>
                <path d="M260 722L269 717L271 725Z" fill="#b01018"/>
                <g font-size="9" font-weight="bold">
                    <text x="268" y="689" fill="#3333a6">Z</text>
                    <text x="298" y="700" fill="#5be06b">Y</text>
                    <text x="254" y="723" fill="#d2444a">X</text>
                </g>
            </svg>
        `;
    }
}

class SwViewport extends SwElement {
    styles() {
        return `
            :host { display: grid; grid-template: minmax(0, 1fr) / minmax(0, 1fr); background: white; }
            sw-model, .over { grid-area: 1 / 1; }
            .over { z-index: 1; display: flex; align-items: flex-start; align-self: start; }
            .hud { flex: 1; display: flex; justify-content: center; padding: 2px 0 0 98px; }
            .confirm { display: flex; align-items: flex-start; margin-top: 31px; padding-right: 6px; }
            .confirm svg { display: block; }
            .cancel { margin: 33px 0 0 -1px; }
            aside { width: 26px; margin-top: 29px; border: 1px solid #777; border-width: 0 0 1px 1px; }
            aside button { width: 100%; height: 24px; display: flex; align-items: center; justify-content: center; background: var(--tab); border-top: 1px solid #777; }
            aside .on { background: white; }
        `;
    }

    template() {
        const hud = ['zoomfit', 'zoomarea', 'prevview', 'section', 'dynann', 'orient+', 'style+', 'eye+', 'appear', 'scene+', 'screen+'];
        const pane = ['home', 'library', 'files', 'palette', 'ball', 'list'];
        return `
            <sw-model></sw-model>
            <div class="over">
                <div class="hud">
                    ${hud.map(h => `<sw-icon-button light icon="${h.replace('+', '')}" ${h.endsWith('+') ? 'menu' : ''}></sw-icon-button>`).join('')}
                </div>
                <div class="confirm">
                    <button aria-label="Exit sketch">
                        <svg width="46" height="40" viewBox="0 0 46 40">
                            <path d="M22 3H2v16q0 8 8 8h12" fill="none" stroke="#c9dbe4" stroke-width="2"/>
                            <path d="M23 27l10-9v5q8 0 12-6 0 12-12 13v6z" fill="#d3e6ef" stroke="#afc6d1"/>
                        </svg>
                    </button>
                    <button class="cancel" aria-label="Cancel sketch">
                        <svg width="26" height="26" viewBox="0 0 26 26">
                            <path d="M2 6l4-4 7 6 7-6 4 4-6 7 6 7-4 4-7-6-7 6-4-4 6-7z" fill="#f1bcbc" stroke="#eccaca"/>
                        </svg>
                    </button>
                </div>
                <aside>
                    ${pane.map(p => `<button aria-label="${p}" class="${p === 'library' ? 'on' : ''}"><sw-icon name="${p}"></sw-icon></button>`).join('')}
                </aside>
            </div>
        `;
    }
}

// Model and motion study tabs under the graphics area
class SwViews extends SwElement {
    styles() {
        return `
            :host { display: flex; flex: none; height: 16px; background: var(--bar); border-top: 1px solid var(--line); }
            .nav { display: flex; width: 67px; background: #999; padding: 0 1px; }
            .nav button { flex: 1; border: 1px solid #808080; background: #a3a3a3; display: flex; align-items: center; justify-content: center; }
            .nav svg { width: 8px; height: 8px; }
            [role=tab] { padding: 0 10px; background: var(--tab); border-right: 1px solid var(--line); color: #222; }
            [aria-selected=true] { background: white; font-weight: bold; color: #000; padding: 0 10px 0 12px; }
            [role=tab]:last-child { padding-right: 20px; }
        `;
    }

    template() {
        const nav = { First: 'M1 0v8M7 0v8L3 4z', Previous: 'M6 0v8L2 4z', Next: 'M2 0v8l4-4z', Last: 'M7 0v8M1 0v8l4-4z' };
        return `
            <div class="nav">
                ${Object.entries(nav).map(([n, d]) => `<button aria-label="${n}"><svg viewBox="0 0 8 8"><path d="${d}" fill="#808080" stroke="#808080"/></svg></button>`).join('')}
            </div>
            <button role="tab" aria-selected="true">Model</button>
            <button role="tab">3D Views</button>
            <button role="tab">Motion Study 1</button>
        `;
    }
}

class SwStatus extends SwElement {
    styles() {
        return `
            :host { display: flex; align-items: center; flex: none; height: 19px; padding: 0 2px 0 1px; background: var(--bar); border-top: 1px solid var(--line); }
            .right { display: flex; align-items: center; margin-left: auto; }
            .gap { width: 18px; }
            .wide { width: 120px; }
            .up { rotate: 180deg; margin: 0 20px 0 14px; }
            .grip { align-self: flex-end; width: 8px; height: 8px; margin-left: 10px; background: radial-gradient(#aaa 1px, transparent 1px) 0 0 / 4px 4px; clip-path: polygon(100% 0, 100% 100%, 0 100%); }
        `;
    }

    template() {
        return `
            <slot name="product"></slot>
            <div class="right">
                <slot name="state"></slot>
                <span class="gap"></span>
                <slot name="editing"></slot>
                <span class="wide"></span>
                <slot name="units"></slot>
                <sw-caret class="up"></sw-caret>
                <sw-icon name="stamp"></sw-icon>
                <span class="grip"></span>
            </div>
        `;
    }
}

// Component registration
customElements.define('sw-icon', SwIcon);
customElements.define('sw-caret', SwCaret);
customElements.define('sw-icon-button', SwIconButton);
customElements.define('sw-tool', SwTool);
customElements.define('sw-titlebar', SwTitlebar);
customElements.define('sw-ribbon', SwRibbon);
customElements.define('sw-tabs', SwTabs);
customElements.define('sw-feature', SwFeature);
customElements.define('sw-panel', SwPanel);
customElements.define('sw-model', SwModel);
customElements.define('sw-viewport', SwViewport);
customElements.define('sw-views', SwViews);
customElements.define('sw-status', SwStatus);
</script>
</body>
</html>
